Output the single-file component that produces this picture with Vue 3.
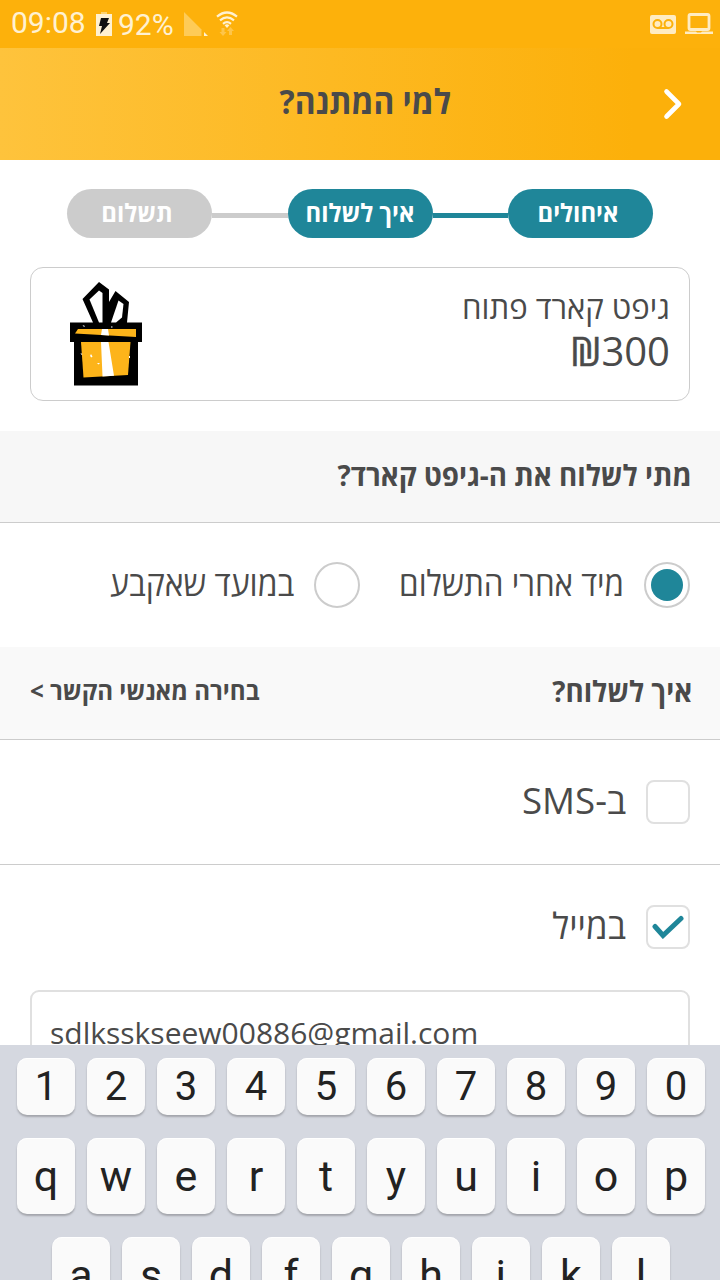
<script setup>
const steps = [
  { label: 'איחולים', state: 'done' },
  { label: 'איך לשלוח', state: 'done current' },
  { label: 'תשלום', state: 'next' },
]
const keyRows = [
  { name: 'digits', keys: [...'1234567890'] },
  { name: 'top', keys: [...'qwertyuiop'] },
  { name: 'home', keys: [...'asdfghjkl'] },
]
</script>

<template>
  <div class="screen" dir="rtl">
    <div class="status" dir="ltr">
      <span class="clock">09:08</span>
      <svg class="battery" width="16" height="24" viewBox="0 0 16 24">
        <path d="M5 0h6v3H5z" fill="#fed36f" />
        <path d="M0 2h16v22H0z" fill="#fff1d2" />
        <path d="M5 6h8l-2 5h3L4 22l2-8H3z" fill="#111" />
      </svg>
      <span class="percent">92%</span>
      <svg class="signal" width="24" height="24" viewBox="0 0 24 24">
        <path d="M0 0L17.500 17.500V24H0z" fill="#fecb57" />
        <path d="M20 20l4 4h-4z" fill="#fff1d2" />
      </svg>
      <svg class="wifi" width="22" height="25" viewBox="0 0 22 25">
        <g fill="none" stroke="#fff1d2" stroke-width="2.200">
          <path d="M1 5.600Q11-2.600 21 5.600" />
          <path d="M4 9.300Q11 3.500 18 9.300" />
          <path d="M7 12.800Q11 9.400 15 12.800" />
        </g>
        <path d="M8.600 14.200Q11 12.500 13.400 14.200L11 17z" fill="#fff1d2" />
        <path d="M5.500 17h3v4h2L7 25l-3.500-4h2zM13 24v-4h-2l3.500-4 3.500 4h-2v4z" fill="#fec54a" />
      </svg>
      <span class="spacer"></span>
      <svg class="voicemail" width="26" height="19" viewBox="0 0 26 19">
        <rect width="26" height="19" rx="2" fill="#ffecc2" />
        <g fill="none" stroke="#fcb10a" stroke-width="2">
          <circle cx="7.500" cy="9" r="4" />
          <circle cx="18.500" cy="9" r="4" />
          <path d="M7.500 13h11" />
        </g>
      </svg>
      <svg class="laptop" width="28" height="22" viewBox="0 0 28 22">
        <rect x="4" y="1.500" width="20" height="15" rx="1.500" fill="none" stroke="#ffecc2" stroke-width="2.800" />
        <path d="M0 18.500h11l1 1h4l1-1h11V21H0z" fill="#ffecc2" />
      </svg>
    </div>

    <header class="header">
      <h1 class="title">למי המתנה?</h1>
      <svg class="chevron" width="20" height="34" viewBox="0 0 20 34">
        <path d="M3.500 4.500L16 17 3.500 29.500" fill="none" stroke="#fff" stroke-width="4.600" stroke-linecap="round" stroke-linejoin="round" />
      </svg>
    </header>

    <nav class="steps">
      <template v-for="(s, i) in steps" :key="s.label">
        <i v-if="i" class="link" :class="s.state"></i>
        <span class="pill" :class="s.state"><b>{{ s.label }}</b></span>
      </template>
    </nav>

    <section class="card">
      <div class="card-text">
        <div class="card-name">גיפט קארד פתוח</div>
        <div class="card-price" dir="ltr"><span class="shekel">₪</span>300</div>
      </div>
      <svg class="gift" width="72" height="104" viewBox="0 0 72 104">
        <path d="M0 40.500H23L12.500 17 29 0 39 7.500V20L45.500 9 59 20 57 40.500H72V60H68V103.500H4V60H0z" fill="#000" />
        <path d="M29 8.500L19.500 17.500 29 40.500H32.500V11z" fill="#fff" />
        <path d="M48.500 18.500L41 40.500H46L52 35.500 53.500 22z" fill="#fff" />
        <path d="M8 47H66V55L5 51.500z" fill="#fdb41a" />
        <path d="M11 60H60.500L58 93 13.500 95.500z" fill="#fdb41a" />
        <path d="M32 47h6l1 6.500-8-.500zM31 60h7.500L44 93.800 32.500 94.400z" fill="#fff" />
        <path d="M12.500 43l2.500 1-1 1zM41 44.500h1.500v1H41zM10.500 71l2 1-1 1zM20 74l1-2 1.500 2.500-1 1zM27 81h3l-1.500 1.500zM59 74h1v2h-1z" fill="#fff" />
      </svg>
    </section>

    <section class="band band-when">
      <h2>מתי לשלוח את ה-גיפט קארד?</h2>
    </section>
    <div class="radios">
      <label class="option"><i class="radio on"></i><span class="now">מיד אחרי התשלום</span></label>
      <label class="option later"><i class="radio"></i><span class="date">במועד שאקבע</span></label>
    </div>

    <section class="band band-how">
      <h2>איך לשלוח?</h2>
      <a class="contacts">בחירה מאנשי הקשר &gt;</a>
    </section>
    <label class="check-row ruled"><i class="box"></i><span class="sms">ב-SMS</span></label>
    <label class="check-row by-mail">
      <i class="box">
        <svg width="32" height="24" viewBox="0 0 32 24">
          <path d="M3 11.500L11 20.500 29 3.500" fill="none" stroke="#1f8699" stroke-width="5" stroke-linecap="round" />
        </svg>
      </i>
      <span class="mail">במייל</span>
    </label>
    <div class="field" dir="ltr"><span class="email">sdlksskseew00886@gmail.com</span></div>

    <div class="keyboard" dir="ltr">
      <div v-for="row in keyRows" :key="row.name" class="keys" :class="row.name">
        <span v-for="k in row.keys" :key="k" class="key">{{ k }}</span>
      </div>
    </div>
  </div>
</template>

<style>
html, body { margin: 0; overflow: hidden; background: #fff; }
</style>

<style scoped>
* { box-sizing: border-box; }
.screen { position: relative; width: 720px; height: 1280px; overflow: hidden; background: #fff; color: #4a4a4a; font-family: "Open Sans", "Noto Sans", sans-serif; white-space: nowrap; }
svg { display: block; flex: none; }
.status { display: flex; align-items: flex-start; height: 48px; padding: 0 7px 0 11px; background: #fdb10b; color: #fff1d2; font-family: Roboto, sans-serif; }
.clock { width: 85px; font-size: 30px; line-height: 46px; }
.percent { width: 66px; font-size: 30px; line-height: 49px; }
.battery { margin: 12px 6px 0 0; }
.signal { margin-top: 12px; }
.wifi { margin: 11px 0 0 8px; }
.spacer { flex: 1; }
.voicemail { margin: 15px 9px 0 0; }
.laptop { margin-top: 13px; }
.header { display: flex; justify-content: center; position: relative; height: 112px; background: linear-gradient(90deg, #fec33c, #fcb00a 88%); }
.title { margin: 0; padding: 30px 0 0 12px; font-size: 34px; line-height: 46px; font-weight: 700; transform: scaleX(.935); transform-origin: 50% 0; }
.chevron { position: absolute; right: 37px; top: 39px; }
.steps { display: flex; align-items: center; height: 107px; padding-right: 67px; }
.pill { width: 145px; height: 49px; border-radius: 25px; background: #1f8699; color: #fff; font-size: 25px; line-height: 47px; text-align: center; padding-left: 0; padding-right: 5px; }
.pill b { display: block; font-weight: 700; transform: scaleX(.955); }
.pill.current { padding-right: 1px; }
.pill { flex: none; }
.link { width: 75px; height: 5px; margin-top: 3px; background: #1f8699; }
.link.next { width: 76px; }
.pill.next, .link.next { background: #ccc; }
.card { display: flex; justify-content: space-between; width: 660px; height: 134px; margin: 0 30px 30px; padding: 0 19px 0 39px; border: 1px solid #ccc; border-radius: 13px; }
.card-text { padding-top: 17px; }
.card-name { font-size: 32px; line-height: 44px; transform: scaleX(.972); transform-origin: 100% 50%; }
.card-price { margin-top: -1px; font-size: 40px; line-height: 46px; text-align: right; }
.shekel { -webkit-text-stroke: .5px currentColor; }
.gift { margin-top: 14px; }
.band { display: flex; justify-content: space-between; padding: 0 28px 0 30px; background: #f7f7f7; border-bottom: 1px solid #ccc; }
.band-when { height: 92px; }
.band-how { height: 93px; background: #f9f9f9; }
h2 { margin: 0; font-size: 29px; line-height: 88px; font-weight: 700; transform: scaleX(.958); transform-origin: 100% 50%; }
.band-how h2 { line-height: 87px; }
.contacts { font-size: 25px; line-height: 87px; font-weight: 700; transform: scaleX(.966); transform-origin: 0 50%; }
.radios { display: flex; height: 124px; padding-right: 30px; }
.option { display: flex; gap: 20px; }
.option span { display: block; font-size: 35px; line-height: 120px; transform-origin: 100% 50%; }
.now { width: 225px; transform: scaleX(.896); }
.date { transform: scaleX(.915); }
.later { margin-right: 39px; }
.radio { flex: none; width: 46px; height: 46px; margin-top: 39px; border: 2px solid #ccc; border-radius: 50%; }
.radio.on { padding: 5px; background: #1f8699 content-box; }
.check-row { display: flex; align-items: center; gap: 20px; height: 125px; padding-right: 30px; }
.ruled { border-bottom: 1px solid #ccc; }
.by-mail { padding-bottom: 2px; }
.box { display: flex; align-items: center; justify-content: center; width: 44px; height: 44px; border: 2px solid #e0e0e0; border-radius: 8px; }
.check-row span { font-size: 36px; line-height: 60px; margin-top: -2px; transform-origin: 100% 50%; }
.sms { transform: scaleX(1.02); }
.mail { transform: scaleX(.97); }
.field { width: 660px; height: 90px; margin: 0 30px; padding: 20px 18px; border: 2px solid #e0e0e0; border-radius: 9px; font-size: 30px; line-height: 42px; }
.keyboard { position: absolute; left: 0; top: 1045px; width: 720px; height: 235px; padding: 13px 15px 0 17px; overflow: hidden; background: #d5d8e0; color: #222; font-family: Roboto, sans-serif; }
.keys { display: flex; gap: 12px; margin-bottom: 23px; }
.home { padding-left: 35px; }
.key { width: 58px; height: 76px; flex: none; border-radius: 10px; background: #fafafa; box-shadow: 0 2px 2px #a3a5ab, inset 0 1px 1px #fff; text-align: center; font-size: 43px; line-height: 77px; }
.digits .key { height: 57px; font-size: 40px; line-height: 57px; }
</style>
